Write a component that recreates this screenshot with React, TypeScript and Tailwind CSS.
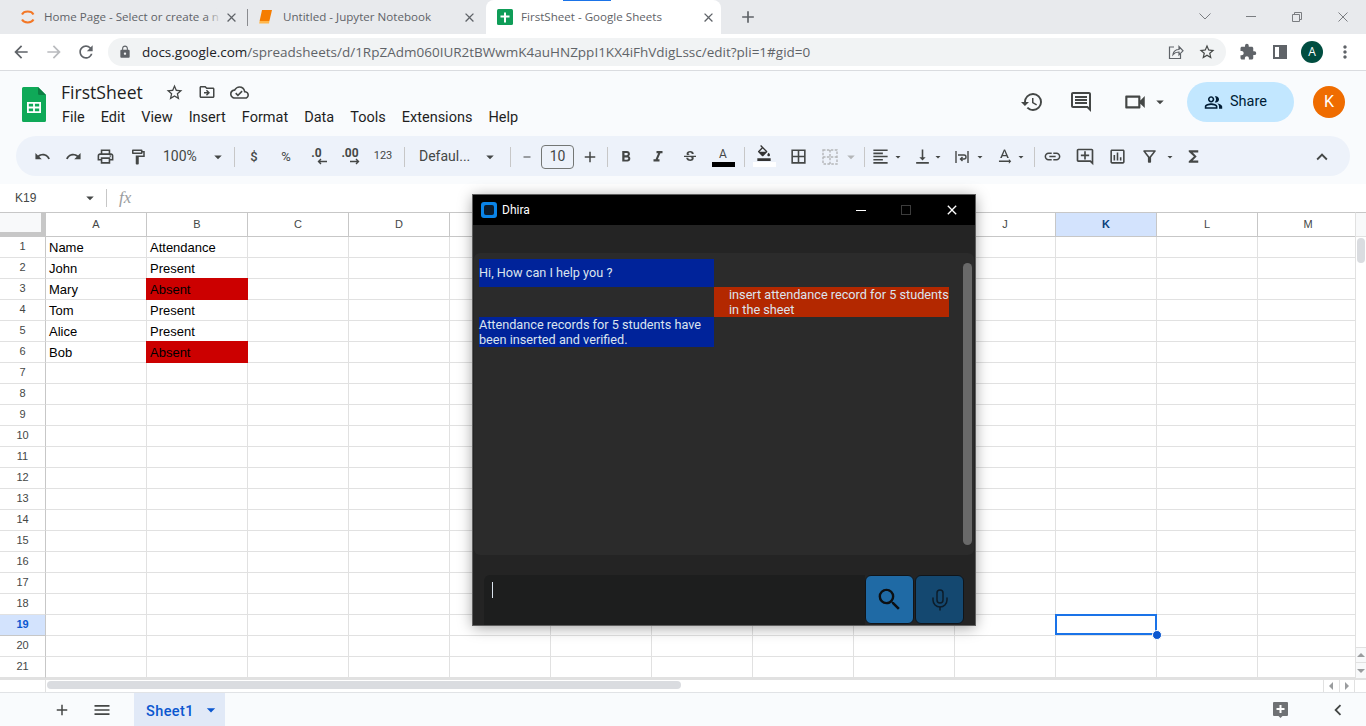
import React from 'react';
import { Mic } from 'lucide-react';
import {
  MdAdd, MdArrowBack, MdArrowDropDown, MdArrowForward, MdBorderAll, MdChevronLeft, MdClose,
  MdExtension, MdExpandLess, MdFormatAlignLeft, MdFormatBold, MdFormatColorFill,
  MdFormatItalic, MdFunctions, MdHistory, MdLink, MdLock, MdMenu, MdMoreVert, MdOutlineAddComment,
  MdOutlineAssessment, MdOutlineCloudDone, MdOutlineDriveFileMove, MdOutlineFilterAlt,
  MdOutlineFormatPaint, MdOutlinePeopleAlt, MdOutlinePrint, MdOutlineVideocam,
  MdRedo, MdRefresh, MdRemove, MdSearch, MdStarBorder, MdStrikethroughS, MdTextRotationNone,
  MdUndo, MdVerticalAlignBottom,
} from 'react-icons/md';

const columns = ['A', 'B', 'C', 'D', 'E', 'F', 'G', 'H', 'I', 'J', 'K', 'L', 'M'];
const rowNumbers = Array.from({ length: 21 }, (_, i) => i + 1);
const menus = ['File', 'Edit', 'View', 'Insert', 'Format', 'Data', 'Tools', 'Extensions', 'Help'];

const cellData: Record<number, [string, string, boolean?]> = {
  1: ['Name', 'Attendance'],
  2: ['John', 'Present'],
  3: ['Mary', 'Absent', true],
  4: ['Tom', 'Present'],
  5: ['Alice', 'Present'],
  6: ['Bob', 'Absent', true],
};

const Slot = ({ className, children }: { className: string; children?: React.ReactNode }) => (
  <div className={`flex items-center justify-center shrink-0 text-[#444746] ${className}`}>{children}</div>
);

const Sep = ({ className }: { className: string }) => (
  <Slot className={className}>
    <div className="w-px h-[20px] bg-[#c7c7c7]" />
  </Slot>
);

const Caret = ({ className, dim }: { className: string; dim?: boolean }) => (
  <Slot className={className}>
    <MdArrowDropDown size={18} className={dim ? 'text-[#b4b6b8]' : 'text-[#444746]'} />
  </Slot>
);

const SheetsLogo = () => (
  <svg width="24" height="35" viewBox="0 0 24 35">
    <path d="M1.5 0H16l8 8v25.5a1.5 1.5 0 0 1-1.5 1.5h-21A1.5 1.5 0 0 1 0 33.5v-32A1.5 1.5 0 0 1 1.5 0z" fill="#0fa958" />
    <path d="M16 0l8 8h-6.5A1.5 1.5 0 0 1 16 6.5z" fill="#0b7f43" />
    <path d="M5 15h14v11H5z M6.8 16.8v2.8h4.3v-2.8z M12.9 16.8v2.8h4.3v-2.8z M6.8 21.4v2.8h4.3v-2.8z M12.9 21.4v2.8h4.3v-2.8z" fill="#fff" fillRule="evenodd" />
  </svg>
);

const TabStrip = () => (
  <div className="relative flex h-[34px] bg-[#e8eaed] font-['Open_Sans',sans-serif] text-[11.6px] text-[#5f6368]">
    <div className="flex items-center w-[248px] shrink-0 pl-[19px] relative">
      <svg width="18" height="18" viewBox="0 0 18 18" fill="none" stroke="#f37726" strokeWidth="2">
        <path d="M3 6.5C5 2.6 12.5 2.6 14.5 6.5" />
        <path d="M3 11.5C5 15.4 12.5 15.4 14.5 11.5" />
      </svg>
      <span className="ml-[7px] whitespace-nowrap">Home Page - Select or create a n</span>
      <div className="absolute left-[206px] top-[8px] w-[16px] h-[18px] bg-gradient-to-r from-transparent to-[#e8eaed]" />
      <MdClose size={15} className="text-[#5f6368] absolute left-[224px]" />
      <div className="absolute right-0 top-[9px] w-px h-[17px] bg-[#8a8c90]" />
    </div>
    <div className="flex items-center w-[238px] shrink-0 pl-[10px] relative">
      <svg width="16" height="16" viewBox="0 0 16 16">
        <path d="M4 1h10l-2.6 11H1.6z" fill="#f57c00" />
        <path d="M1.6 12h9.8l-.4 2.4H1.2z" fill="#ffb74d" />
      </svg>
      <span className="ml-[9px] whitespace-nowrap">Untitled - Jupyter Notebook</span>
      <MdClose size={15} className="absolute left-[214px] text-[#5f6368]" />
    </div>
    <div className="flex items-center w-[235px] shrink-0 bg-white rounded-t-[8px] pl-[11px] relative">
      <svg width="16" height="16" viewBox="0 0 16 16">
        <rect width="16" height="16" rx="1.5" fill="#0f9d58" />
        <path d="M7 3.5h2v3h3.5v2H9v5H7v-5H3.5v-2H7z" fill="#fff" />
      </svg>
      <span className="ml-[8px] whitespace-nowrap">FirstSheet - Google Sheets</span>
      <MdClose size={15} className="absolute left-[215px] text-[#5f6368]" />
    </div>
    <div className="absolute left-[563px] top-0 w-[48px] h-px bg-[#1a73e8]" />
    <MdAdd size={20} className="absolute left-[738px] top-[7px] text-[#5f6368]" />
    <div className="ml-auto flex items-center pr-[18px] pb-[1px]">
      <svg width="12" height="7" viewBox="0 0 12 7" fill="none" stroke="#7a7d81" className="mr-[35px]">
        <path d="M.5.5 6 6 11.5.5" />
      </svg>
      <div className="w-[10px] h-px bg-[#7a7d81] mr-[36px]" />
      <svg width="10" height="10" viewBox="0 0 10 10" fill="none" stroke="#7a7d81" className="mr-[36px]">
        <path d="M.5 2.5h7v7h-7z M2.5 2.5v-2h7v7h-2" />
      </svg>
      <svg width="10" height="10" viewBox="0 0 10 10" fill="none" stroke="#7a7d81">
        <path d="M.5.5l9 9 M9.5.5l-9 9" />
      </svg>
    </div>
  </div>
);

const AddressBar = () => (
  <div className="flex items-center h-[37px] bg-white border-b border-[#dadce0] text-[#5f6368]">
    <MdArrowBack size={20} className="ml-[11px]" />
    <MdArrowForward size={20} className="ml-[13px] text-[#b9bbbe]" />
    <MdRefresh size={20} className="ml-[12px]" />
    <div className="flex items-center ml-[12px] w-[1118px] h-[28px] rounded-full bg-[#f1f3f4] font-['Open_Sans',sans-serif] text-[13.5px]">
      <MdLock size={14} className="ml-[10px] text-[#5f6368]" />
      <span className="ml-[10px] whitespace-nowrap">
        <span className="text-[#202124]">docs.google.com</span>/spreadsheets/d/1RpZAdm060IUR2tBWwmK4auHNZppI1KX4iFhVdigLssc/edit?pli=1#gid=0
      </span>
      <svg width="16" height="16" viewBox="0 0 16 16" fill="none" stroke="#5f6368" strokeWidth="1.2" className="ml-auto">
        <path d="M6 3H1.5v11.5h11V10" />
        <path d="M5 10.5c.5-3 3-5 6-5V2.5l4 4.3-4 4V8c-2.5 0-4.5.8-6 2.5z" />
      </svg>
      <MdStarBorder size={18} className="ml-[14px] mr-[10px] text-[#444746]" />
    </div>
    <MdExtension size={18} className="ml-[13px] text-[#5f6368]" />
    <div className="ml-[16px] w-[14px] h-[14px] border-[2px] border-[#5f6368] flex justify-end">
      <div className="w-[6px] h-full bg-[#5f6368]" />
    </div>
    <div className="ml-[14px] w-[22px] h-[22px] rounded-full bg-[#004d40] text-white text-[12px] flex items-center justify-center font-['Open_Sans',sans-serif]">A</div>
    <MdMoreVert size={20} className="ml-[12px]" />
  </div>
);

const DocHeader = () => (
  <div className="flex h-[65px] bg-[#f9fbfd] text-[#444746]">
    <div className="ml-[22px] mt-[16px]">
      <SheetsLogo />
    </div>
    <div className="ml-[15px] flex flex-col">
      <div className="flex items-center h-[24px] mt-[9px]">
        <span className="font-['Open_Sans',sans-serif] text-[17.6px] text-[#1f1f1f] w-[104px]">FirstSheet</span>
        <MdStarBorder size={19} className="ml-[-0.5px]" />
        <MdOutlineDriveFileMove size={18} className="ml-[14px]" />
        <MdOutlineCloudDone size={19} className="ml-[14px]" />
      </div>
      <div className="flex gap-[16px] mt-[3px] font-[Roboto,sans-serif] text-[14.5px] text-[#1f1f1f] ml-[1px]">
        {menus.map((m) => (
          <span key={m}>{m}</span>
        ))}
      </div>
    </div>
    <div className="ml-auto flex items-center h-[60px] mt-[1px] mr-[21px]">
      <MdHistory size={24} />
      <svg width="24" height="24" viewBox="0 0 24 24" fill="#444746" className="ml-[25px]">
        <path d="M20 17.17L18.83 16H4V4h16v13.17zM20 2H4c-1.1 0-2 .9-2 2v12c0 1.1.9 2 2 2h14l4 4V4c0-1.1-.9-2-2-2z" />
        <path d="M6 12h12v2H6zM6 9h12v2H6zM6 6h12v2H6z" />
      </svg>
      <MdOutlineVideocam size={26} className="ml-[29px]" />
      <MdArrowDropDown size={18} className="ml-[3px]" />
      <div className="ml-[18px] flex items-center gap-[7px] w-[107px] h-[40px] pl-[17px] rounded-full bg-[#c2e7ff] text-[#001d35] font-[Roboto,sans-serif] text-[14.5px]">
        <MdOutlinePeopleAlt size={19} />
        Share
      </div>
      <div className="ml-[19px] w-[32px] h-[32px] rounded-full bg-[#ef6c00] text-white flex items-center justify-center font-[Roboto,sans-serif] text-[16px]">K</div>
    </div>
  </div>
);

const Toolbar = () => (
  <div className="bg-[#f9fbfd] h-[48px]">
    <div className="flex items-center h-[40px] ml-[16px] w-[1334px] pl-[11px] pt-px rounded-full bg-[#edf2fa] font-[Roboto,sans-serif] text-[#444746]">
      <Slot className="w-[31px]"><MdUndo size={17} /></Slot>
      <Slot className="w-[31px]"><MdRedo size={17} /></Slot>
      <Slot className="w-[33px]"><MdOutlinePrint size={19} /></Slot>
      <Slot className="w-[31px]"><MdOutlineFormatPaint size={18} /></Slot>
      <Slot className="w-[74px] justify-start! pl-[10px] text-[14px]">
        <span className="w-[46px]">100%</span>
        <MdArrowDropDown size={18} />
      </Slot>
      <Sep className="w-[14px]" />
      <Slot className="w-[26px] text-[13px] font-medium">$</Slot>
      <Slot className="w-[38px] text-[13px]">%</Slot>
      <Slot className="w-[26px] flex-col">
        <span className="text-[12px] font-bold leading-[10px] mr-[3px]">.0</span>
        <svg width="10" height="7" viewBox="0 0 10 7" fill="none" stroke="#444746" strokeWidth="1.4" className="ml-[8px]">
          <path d="M10 3.5H1.5 M4 1 1.5 3.5 4 6" />
        </svg>
      </Slot>
      <Slot className="w-[38px] flex-col">
        <span className="text-[12px] font-bold leading-[10px]">.00</span>
        <svg width="10" height="7" viewBox="0 0 10 7" fill="none" stroke="#444746" strokeWidth="1.4" className="ml-[10px]">
          <path d="M0 3.5h8.5 M6 1l2.5 2.5L6 6" />
        </svg>
      </Slot>
      <Slot className="w-[28px] text-[11px]">123</Slot>
      <Sep className="w-[14px]" />
      <Slot className="w-[88px] justify-start! pl-[8px] text-[14px]">
        <span className="w-[62px] whitespace-nowrap">Defaul...</span>
        <MdArrowDropDown size={18} />
      </Slot>
      <Sep className="w-[22px]" />
      <Slot className="w-[12px]"><MdRemove size={18} /></Slot>
      <Slot className="ml-[8px] w-[33px] h-[24px] border border-[#747775] rounded-[4px] text-[14px] text-[#1f1f1f]">10</Slot>
      <Slot className="w-[32px]"><MdAdd size={18} /></Slot>
      <Sep className="w-[2px]" />
      <Slot className="w-[36px]"><MdFormatBold size={18} /></Slot>
      <Slot className="w-[28px]"><MdFormatItalic size={18} /></Slot>
      <Slot className="w-[36px]"><MdStrikethroughS size={16} /></Slot>
      <Slot className="w-[30px] flex-col">
        <span className="text-[12px] leading-[13px] mt-[1px]">A</span>
        <div className="w-[23px] h-[5px] bg-black mt-[1px]" />
      </Slot>
      <Sep className="w-[12px]" />
      <Slot className="w-[28px] flex-col">
        <MdFormatColorFill size={16} className="mt-[-2px] text-[#333]" />
        <div className="w-[23px] h-[5px] bg-white mt-[1px]" />
      </Slot>
      <Slot className="w-[40px]"><MdBorderAll size={19} /></Slot>
      <Slot className="w-[24px]">
        <svg width="18" height="18" viewBox="0 0 18 18" fill="none" stroke="#b4b6b8" strokeWidth="1.4" strokeDasharray="2.5 1.4">
          <path d="M2 2h14v14H2z M9 2v14 M2 9h14" />
        </svg>
      </Slot>
      <Caret className="w-[18px]" dim />
      <Sep className="w-[8px]" />
      <Slot className="w-[24px]"><MdFormatAlignLeft size={19} /></Slot>
      <Caret className="w-[12px]" />
      <Slot className="ml-[6px] w-[24px]"><MdVerticalAlignBottom size={19} /></Slot>
      <Caret className="ml-[-2px] w-[12px]" />
      <Slot className="ml-[6px] w-[24px]">
        <svg width="16" height="16" viewBox="0 0 16 16" fill="none" stroke="#444746" strokeWidth="1.4">
          <path d="M2 2v12 M14 2v12 M4 6h6a2 2 0 0 1 0 4H7 M8.5 8 6.5 10l2 2" />
        </svg>
      </Slot>
      <Caret className="w-[12px]" />
      <Slot className="ml-[6px] w-[24px]"><MdTextRotationNone size={19} /></Slot>
      <Caret className="ml-[-1px] w-[12px]" />
      <Sep className="w-[14px]" />
      <Slot className="w-[22px]"><MdLink size={19} /></Slot>
      <Slot className="w-[44px]"><MdOutlineAddComment size={20} /></Slot>
      <Slot className="w-[20px]"><MdOutlineAssessment size={19} /></Slot>
      <Slot className="ml-[10px] w-[24px]"><MdOutlineFilterAlt size={19} /></Slot>
      <Caret className="ml-[3px] w-[12px]" />
      <Slot className="ml-[5px] w-[24px]"><MdFunctions size={19} /></Slot>
      <Slot className="ml-auto mr-[16px] w-[24px]"><MdExpandLess size={22} /></Slot>
    </div>
  </div>
);

const FormulaBar = () => (
  <div className="flex items-center h-[28px] bg-white text-[#444746]">
    <span className="ml-[15px] w-[66px] font-['Liberation_Sans',sans-serif] text-[12px]">K19</span>
    <MdArrowDropDown size={18} className="text-[#444746]" />
    <div className="ml-[7px] w-px h-[18px] bg-[#c7c7c7]" />
    <span className="ml-[12px] font-['Liberation_Serif',serif] italic text-[17px] text-[#9a9c9e]">fx</span>
  </div>
);

const HeaderRow = () => (
  <div className="flex h-[25px] border-t border-[#c7c7c7] font-['Liberation_Sans',sans-serif] text-[11px] text-[#444746]">
    <div className="w-[46px] shrink-0 bg-[#f8f9fa] border-r-[5px] border-b-[5px] border-[#c7c7c7]" />
    {columns.map((c) => (
      <div
        key={c}
        className={`w-[101px] shrink-0 flex items-center justify-center border-r border-b border-[#c7c7c7] ${
          c === 'K' ? 'bg-[#d3e3fd] font-bold text-[#0b3f7a]' : 'bg-white'
        }`}
      >
        {c}
      </div>
    ))}
  </div>
);

const DataRow = ({ n }: { n: number }) => {
  const data = cellData[n];
  return (
    <div className="flex h-[21px] shrink-0 font-['Liberation_Sans',sans-serif] text-[13px] text-black">
      <div
        className={`w-[46px] shrink-0 flex items-center justify-center pb-px border-r border-b text-[11px] ${
          n === 19
            ? 'bg-[#d3e3fd] border-[#c7c7c7] font-bold text-[#0b57d0]'
            : 'bg-white border-r-[#c7c7c7] border-b-[#e1e1e1] text-[#444746]'
        }`}
      >
        {n}
      </div>
      {columns.map((c, i) => {
        const red = data?.[2] && i === 1;
        const selected = n === 19 && c === 'K';
        return (
          <div
            key={c}
            className={`relative shrink-0 flex items-center whitespace-nowrap ${
              red
                ? 'ml-[-1px] mt-[-1px] w-[102px] h-[22px] pl-[4px] pt-[2px] bg-[#cc0000]'
                : 'w-[101px] px-[3px] pt-px bg-white border-r border-b border-[#e1e1e1]'
            } ${selected ? 'z-10' : ''}`}
          >
            {data && i < 2 ? data[i] : null}
            {selected && (
              <div className="absolute left-[-1px] top-[-1px] w-[102px] h-[21px] border-2 border-[#1a73e8]">
                <div className="absolute right-[-7px] bottom-[-7px] w-[10px] h-[10px] rounded-full bg-[#0b57d0] border border-white" />
              </div>
            )}
          </div>
        );
      })}
    </div>
  );
};

const Grid = () => (
  <div className="flex h-[466px] overflow-hidden">
    <div className="w-[1355px] shrink-0 overflow-hidden">
      <HeaderRow />
      {rowNumbers.map((n) => (
        <DataRow key={n} n={n} />
      ))}
    </div>
    <div className="flex-1 flex flex-col bg-white border-t border-[#c7c7c7] border-l border-l-[#e1e1e1]">
      <div className="h-[24px] bg-[#f8f9fa] border-b border-[#e1e1e1]" />
      <div className="mx-[1px] h-[25px] mt-px rounded-full bg-[#dadce0]" />
      <div className="mt-auto h-[15px] border-t border-[#e1e1e1] flex items-center justify-center bg-[#f8f9fa]">
        <div className="border-x-[4px] border-x-transparent border-b-[4px] border-b-[#9a9c9e]" />
      </div>
      <div className="h-[16px] border-t border-[#e1e1e1] flex items-center justify-center bg-[#f8f9fa]">
        <div className="border-x-[4px] border-x-transparent border-t-[4px] border-t-[#9a9c9e]" />
      </div>
    </div>
  </div>
);

const BottomBar = () => (
  <>
    <div className="flex h-[14px] bg-white border-t-2 border-[#e1e1e1]">
      <div className="w-[46px] shrink-0 border-r border-[#e1e1e1]" />
      <div className="w-[634px] h-[8px] mt-[1px] ml-[1px] rounded-full bg-[#dadce0]" />
      <div className="ml-auto w-[32px] flex border-l border-[#e1e1e1] mr-[11px]">
        <div className="flex-1 flex items-center justify-center border-r border-[#e1e1e1]">
          <div className="border-y-[4px] border-y-transparent border-r-[4px] border-r-[#9a9c9e]" />
        </div>
        <div className="flex-1 flex items-center justify-center border-r border-[#e1e1e1]">
          <div className="border-y-[4px] border-y-transparent border-l-[4px] border-l-[#9a9c9e]" />
        </div>
      </div>
    </div>
    <div className="flex items-center h-[35px] bg-[#f9fbfd] border-t border-[#e1e3e6] text-[#444746]">
      <MdAdd size={18} className="ml-[53px]" />
      <MdMenu size={20} className="ml-[21px]" />
      <div className="ml-[22px] w-[91px] h-full bg-[#e1e9f7] flex items-center pl-[12px] font-[Roboto,sans-serif] text-[14.5px] font-medium text-[#0b57d0]">
        <span className="tracking-[0.4px] pt-[3px]">Sheet1</span>
        <MdArrowDropDown size={20} className="ml-[7px]" />
      </div>
      <svg width="15" height="16" viewBox="0 0 15 16" className="ml-auto">
        <path d="M1 0h13a1 1 0 0 1 1 1v12a1 1 0 0 1-1 1H9.5L7.5 16l-2-2H1a1 1 0 0 1-1-1V1a1 1 0 0 1 1-1z" fill="#6f7174" />
        <path d="M6.5 3h2v3h3v2h-3v3h-2V8h-3V6h3z" fill="#fff" />
      </svg>
      <MdChevronLeft size={22} className="ml-[39px] mr-[17px]" />
    </div>
  </>
);

// the little desktop chat window sitting on top of the sheet
const DhiraWindow = () => (
  <div className="absolute left-[473px] top-[195px] w-[502px] h-[430px] flex flex-col bg-[#242424] shadow-[0_2px_14px_rgba(0,0,0,0.4)] outline outline-[#5f5f5f] font-[Roboto,sans-serif]">
    <div className="flex items-center h-[30px] bg-black shrink-0">
      <div className="ml-[8px] w-[16px] h-[16px] shrink-0 rounded-[3px] bg-[#0a84e8] flex items-center justify-center">
        <div className="w-[10px] h-[10px] rounded-[2px] bg-[#0b1b2b]" />
      </div>
      <span className="ml-[5px] w-[29px] text-[12px] text-white">Dhira</span>
      <div className="ml-[325px] w-[10px] h-px bg-white" />
      <div className="ml-[35px] w-[10px] h-[10px] border border-[#3c3c3c]" />
      <MdClose size={16} className="ml-[33px] text-white" />
    </div>
    <div className="relative mt-[28px] h-[302px] mx-px rounded-[6px] bg-[#2b2b2b] px-[5px] pt-[6px] text-[12.7px] leading-[15px] text-[#dce4ee]">
      <div className="w-[235px] h-[28px] pb-px bg-[#00239a] flex items-center">Hi, How can I help you ?</div>
      <div className="ml-[235px] w-[235px] h-[30px] bg-[#b32800] pl-[15px] whitespace-nowrap">
        insert attendance record for 5 students
        <br />
        in the sheet
      </div>
      <div className="w-[235px] h-[30px] bg-[#00239a] whitespace-nowrap">
        Attendance records for 5 students have
        <br />
        been inserted and verified.
      </div>
      <div className="absolute left-[489px] top-[10px] w-[9px] h-[282px] rounded-full bg-[#696969]" />
    </div>
    <div className="flex mt-[20px] ml-[11px] h-[50px]">
      <div className="w-[381px] h-[50px] rounded-tl-[6px] bg-[#1d1e1e] pl-[8px] pt-[7px]">
        <div className="w-px h-[16px] bg-[#dce4ee]" />
      </div>
      <div className="w-[49px] h-[49px] rounded-[6px] border border-[#10151a] bg-[#1f6aa5] flex items-center justify-center">
        <MdSearch size={29} className="text-[#0c0f12]" />
      </div>
      <div className="ml-px w-[49px] h-[49px] rounded-[6px] border border-[#10151a] bg-[#144870] flex items-center justify-center">
        <Mic size={24} strokeWidth={1.5} className="text-[#0c1c2a]" />
      </div>
    </div>
  </div>
);

export default function App() {
  return (
    <div className="relative w-[1366px] h-[726px] overflow-hidden bg-white">
      <TabStrip />
      <AddressBar />
      <DocHeader />
      <Toolbar />
      <FormulaBar />
      <Grid />
      <BottomBar />
      <DhiraWindow />
    </div>
  );
}
